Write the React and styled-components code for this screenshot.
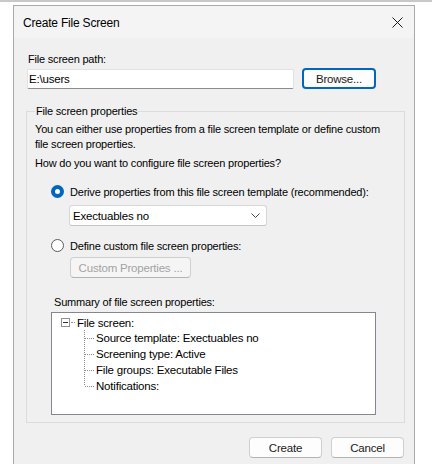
import React from 'react'
import styled, { createGlobalStyle } from 'styled-components'

const GlobalStyle = createGlobalStyle`
	html, body {
		margin: 0;
		padding: 0;
		background: #ffffff;
		overflow: hidden;
	}
	body {
		font-family: 'Liberation Sans', Arial, sans-serif;
		font-size: 11px;
		letter-spacing: -0.2px;
		color: #000;
	}
`

const Page = styled.div`
	width: 432px;
	height: 464px;
	overflow: hidden;
	border-top: 2px solid #c8c8c8;
	box-sizing: border-box;
	padding: 3px 0 0 13px;
`

const Dialog = styled.div`
	width: 402px;
	height: 480px;
	box-sizing: border-box;
	border: 1px solid #a9a9a9;
	background: #f0f0f0;
	display: flex;
	flex-direction: column;
`

const TitleBar = styled.div`
	height: 32px;
	background: #f4f4f4;
	display: flex;
	align-items: center;
	justify-content: space-between;
	padding: 1px 8px 0 9px;
	box-sizing: border-box;
	font-size: 12px;
`

const CloseIcon = styled.svg`
	width: 11px;
	height: 11px;
	margin-right: 3px;
`

const Body = styled.div`
	padding: 14px 9px 0 12px;
	display: flex;
	flex-direction: column;
`

const Label = styled.div`
	line-height: 15px;
	margin-left: ${p => p.$indent || 2}px;
	margin-top: ${p => p.$top || 0}px;
`

const PathRow = styled.div`
	display: flex;
	align-items: center;
	gap: 8px;
	margin-top: 1px;
	margin-left: 1px;
`

const TextInput = styled.div`
	width: 267px;
	height: 20px;
	box-sizing: border-box;
	background: #fff;
	border: 1px solid #e2e2e2;
	border-bottom-color: #8c8c8c;
	border-radius: 2px;
	display: flex;
	align-items: center;
	padding-left: 1px;
	font-size: 11.5px;
`

const Button = styled.div`
	width: ${p => p.$w}px;
	height: 21px;
	box-sizing: border-box;
	border: ${p => (p.$focus ? '2px solid #0067c0' : '1px solid #cfcfcf')};
	border-bottom-color: ${p => (p.$focus ? '#0067c0' : '#b3b3b3')};
	border-radius: 4px;
	background: ${p => (p.$disabled ? '#f5f5f5' : '#fdfdfd')};
	color: ${p => (p.$disabled ? '#a3a3a3' : '#1a1a1a')};
	display: flex;
	align-items: center;
	justify-content: center;
	font-size: 11.5px;
	margin-top: ${p => p.$top || 0}px;
	margin-left: ${p => p.$left || 0}px;
`

const Group = styled.fieldset`
	margin: 15px 0 0 0;
	padding: 2px 8px 7px 8px;
	border: 1px solid #dcdcdc;
	display: flex;
	flex-direction: column;
`

const Legend = styled.legend`
	padding: 0 1px;
	margin-left: 0;
	line-height: 14px;
`

const Para = styled.p`
	margin: ${p => p.$top || 0}px 0 0 0;
	line-height: 15px;
	width: 352px;
`

const RadioRow = styled.div`
	display: flex;
	align-items: center;
	gap: 6px;
	margin: ${p => p.$top}px 0 0 16px;
	height: 15px;
`

const Radio = styled.span`
	width: 13px;
	height: 13px;
	box-sizing: border-box;
	border-radius: 50%;
	flex-shrink: 0;
	border: ${p => (p.$checked ? '4px solid #0067c0' : '1px solid #5c5c5c')};
	background: #fff;
`

const Combo = styled.div`
	width: 198px;
	height: 21px;
	box-sizing: border-box;
	margin: 6px 0 0 34px;
	background: #fff;
	border: 1px solid #d6d6d6;
	border-bottom-color: #c4c4c4;
	border-radius: 3px;
	display: flex;
	align-items: center;
	justify-content: space-between;
	padding: 0 6px 0 3px;
	font-size: 11.5px;
`

const Chevron = styled.svg`
	width: 9px;
	height: 6px;
`

const TreeBox = styled.div`
	margin: 2px 0 0 16px;
	width: 325px;
	height: 103px;
	box-sizing: border-box;
	background: #fff;
	border: 1px solid #828790;
	padding: 2px 0 0 9px;
	font-size: 11.5px;
`

const TreeRow = styled.div`
	display: flex;
	align-items: center;
	height: ${p => p.$h || 16}px;
	padding-left: ${p => p.$indent || 0}px;
`

const Expander = styled.span`
	width: 9px;
	height: 9px;
	box-sizing: border-box;
	border: 1px solid #919191;
	background: #fff;
	position: relative;
	flex-shrink: 0;
	&::after {
		content: '';
		position: absolute;
		left: 1px;
		top: 3px;
		width: 5px;
		height: 1px;
		background: #333;
	}
`

const Dots = styled.span`
	width: 4px;
	height: 1px;
	margin: 0 2px 0 1px;
	border-top: 1px dotted #8e8e8e;
`

const Connector = styled.svg`
	width: 11px;
	height: 16px;
	flex-shrink: 0;
	margin-right: 1px;
`

const Footer = styled.div`
	display: flex;
	justify-content: flex-end;
	gap: 9px;
	margin: 14px 1px 0 0;
`

function TreeChild({ text, last }) {
	return (
		<TreeRow $indent={23}>
			<Connector viewBox="0 0 11 16">
				<line x1="0.5" y1="0" x2="0.5" y2={last ? 8 : 16} stroke="#8e8e8e" strokeDasharray="1 1" />
				<line x1="1" y1="8.5" x2="11" y2="8.5" stroke="#8e8e8e" strokeDasharray="1 1" />
			</Connector>
			{text}
		</TreeRow>
	)
}

export default function App() {
	return (
		<>
			<GlobalStyle />
			<Page>
				<Dialog>
					<TitleBar>
						<span>Create File Screen</span>
						<CloseIcon viewBox="0 0 11 11">
							<path d="M0.5 0.5 L10.5 10.5 M10.5 0.5 L0.5 10.5" stroke="#1a1a1a" strokeWidth="1" fill="none" />
						</CloseIcon>
					</TitleBar>
					<Body>
						<Label>File screen path:</Label>
						<PathRow>
							<TextInput>E:\users</TextInput>
							<Button $w={74} $focus>Browse...</Button>
						</PathRow>
						<Group>
							<Legend>File screen properties</Legend>
							<Para $top={2}>
								You can either use properties from a file screen template or define custom file screen properties.
							</Para>
							<Para $top={4}>How do you want to configure file screen properties?</Para>
							<RadioRow $top={13}>
								<Radio $checked />
								Derive properties from this file screen template (recommended):
							</RadioRow>
							<Combo>
								Exectuables no
								<Chevron viewBox="0 0 9 6">
									<path d="M0.5 0.5 L4.5 4.5 L8.5 0.5" stroke="#444" fill="none" />
								</Chevron>
							</Combo>
							<RadioRow $top={12}>
								<Radio />
								Define custom file screen properties:
							</RadioRow>
							<Button $w={121} $disabled $top={4} $left={35}>Custom Properties ...</Button>
							<Label $indent={19} $top={17}>Summary of file screen properties:</Label>
							<TreeBox>
								<TreeRow $h={15}>
									<Expander />
									<Dots />
									File screen:
								</TreeRow>
								<TreeChild text="Source template: Exectuables no" />
								<TreeChild text="Screening type: Active" />
								<TreeChild text="File groups: Executable Files" />
								<TreeChild text="Notifications:" last />
							</TreeBox>
						</Group>
						<Footer>
							<Button $w={73}>Create</Button>
							<Button $w={73}>Cancel</Button>
						</Footer>
					</Body>
				</Dialog>
			</Page>
		</>
	)
}
